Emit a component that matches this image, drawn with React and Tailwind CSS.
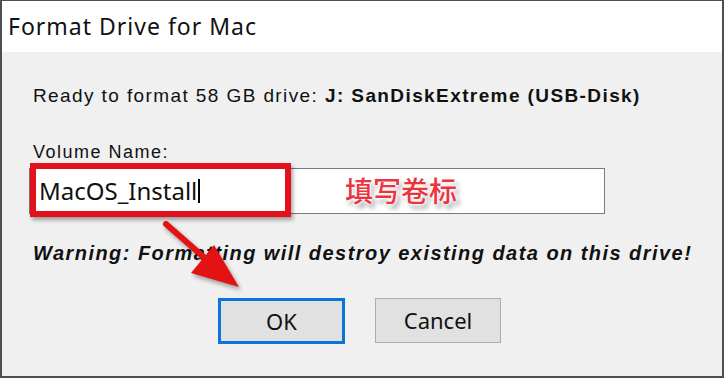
import React from "react";

const ui = { fontFamily: '"Liberation Sans", Arial, sans-serif' };
const segoe = { fontFamily: '"Noto Sans", "Open Sans", sans-serif' };

function RedArrow() {
  return (
    <svg className="absolute left-[150px] top-[215px] drop-shadow-[2px_3px_2px_rgba(0,0,0,0.35)]" width="100" height="80" viewBox="0 0 100 80">
      <line x1="14" y1="8" x2="62" y2="50" stroke="#e41313" strokeWidth="6" strokeLinecap="round" />
      <polygon points="39,57 62,29 87,71" fill="#e41313" />
    </svg>
  );
}

export default function App() {
  return (
    <div className="relative w-[724px] h-[378px] overflow-hidden bg-[#f0f0f0] border-x-2 border-t border-b-2 border-[#4f4f4f] flex flex-col" style={ui}>
      {/* title bar */}
      <div className="h-[51px] bg-white flex items-center pl-[6px] text-[23px] tracking-[1px] text-[#111]" style={segoe}>
        Format Drive for Mac
      </div>

      <div className="flex flex-col pl-[31px] pr-[30px]">
        <div className="mt-[34px] text-[19px] leading-[20px] tracking-[1.4px] text-[#111] whitespace-nowrap">
          Ready to format 58 GB drive: <span className="font-bold">J: SanDiskExtreme (USB-Disk)</span>
        </div>

        <div className="mt-[36px] text-[18px] leading-[20px] tracking-[1.5px] text-[#111]">Volume Name:</div>

        <div className="mt-[6px] ml-[-4px] w-[576px] h-[46px] bg-white border border-[#7a7a7a] flex items-center pl-[9px]">
          <span className="text-[24px] text-[#111] leading-none" style={segoe}>MacOS_Install</span>
          <span className="w-[2px] h-[24px] bg-black ml-[1px]" />
        </div>

        <div className="mt-[28px] text-[20px] leading-[22px] tracking-[1.45px] font-bold italic text-[#111] whitespace-nowrap">
          Warning: Formatting will destroy existing data on this drive!
        </div>

        <div className="mt-[34px] flex pl-[185px] gap-[30px]" style={segoe}>
          <button className="w-[127px] h-[46px] bg-[#e1e1e1] border-[3px] border-[#0a74da] text-[22px] text-[#111] flex items-center justify-center">
            OK
          </button>
          <button className="w-[126px] h-[45px] bg-[#e1e1e1] border border-[#adadad] text-[22px] text-[#111] flex items-center justify-center">
            Cancel
          </button>
        </div>
      </div>

      {/* annotation: red highlight box */}
      <div className="absolute left-[28px] top-[162px] w-[261px] h-[54px] border-[6px] border-[#e3111b] shadow-[2px_3px_4px_rgba(0,0,0,0.35)]" />

      {/* annotation: label */}
      <div
        className="absolute left-[343px] top-[172px] text-[28px] leading-[34px] font-medium text-[#ea3540] [text-shadow:0_0_1px_#fff,0_0_2px_#fff,0_0_3px_#fff,0_0_4px_#fff,0_0_6px_#fff,3px_4px_5px_rgba(0,0,0,0.5)]"
        style={{ fontFamily: '"Noto Sans CJK SC", sans-serif' }}
      >
        填写卷标
      </div>

      <RedArrow />
    </div>
  );
}
